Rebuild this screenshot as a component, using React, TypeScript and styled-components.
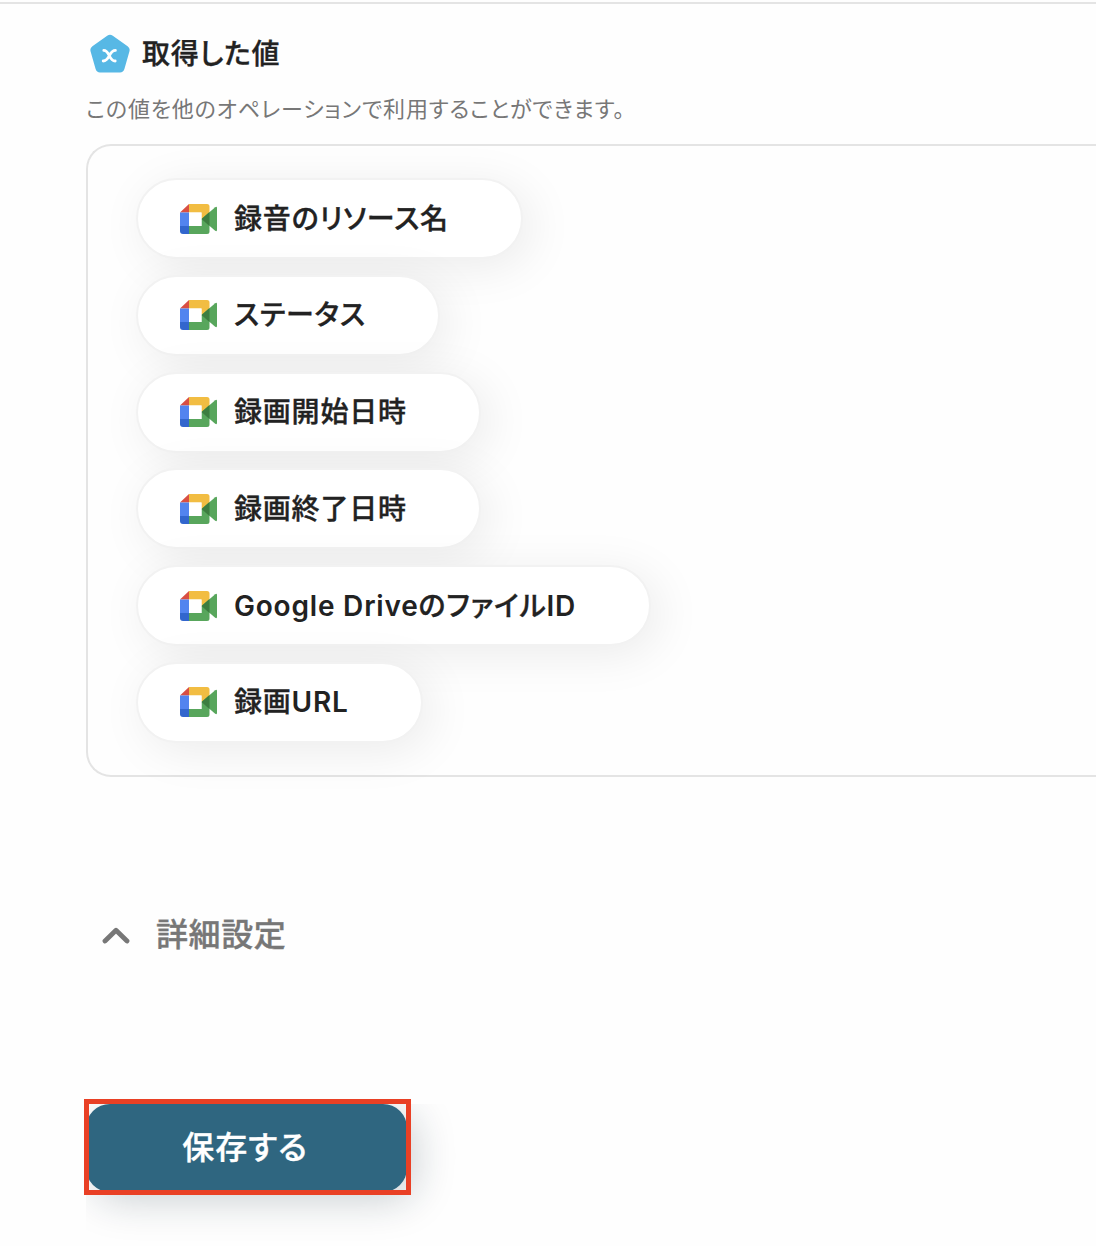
import React from "react";
import styled, { createGlobalStyle } from "styled-components";

const GlobalStyle = createGlobalStyle`
  *, *::before, *::after { box-sizing: border-box; }
  body {
    margin: 0;
    background: #fefefe;
    color: #222;
    font-family: Inter, "Noto Sans CJK JP", sans-serif;
    font-feature-settings: "palt";
  }
`;

const Page = styled.main`
  height: 1246px;
  padding: 2px 0 0 86px;
  overflow: hidden;
  display: flex;
  flex-direction: column;
  background: linear-gradient(#e4e4e4, #e4e4e4) 0 2px / 100% 2px no-repeat;

  & > * {
    flex-shrink: 0;
  }
`;

const Heading = styled.header`
  display: flex;
  align-items: center;
  gap: 12px;
  height: 40px;
  margin-top: 31px;
  padding-left: 4px;
`;

const Title = styled.h2`
  margin: 0;
  padding-top: 1px;
  font-size: 28px;
  line-height: 40px;
  font-weight: 500;
  letter-spacing: 0.8px;
  -webkit-text-stroke: 0.35px currentColor;
  white-space: nowrap;
`;

const Description = styled.p`
  margin: 20px 0 0;
  height: 32px;
  font-size: 22px;
  line-height: 32px;
  letter-spacing: 0.82px;
  color: #777;
  white-space: nowrap;
`;

const Panel = styled.section`
  display: flex;
  flex-direction: column;
  align-items: flex-start;
  gap: 15.8px;
  height: 633px;
  margin-top: 19px;
  padding: 32px 0 0 48px;
  border: 2px solid #e4e4e4;
  border-right: 0;
  border-radius: 25px 0 0 25px;
`;

const Pill = styled.div<{ $width: number }>`
  display: flex;
  align-items: center;
  gap: 16px;
  flex: none;
  width: ${(p) => p.$width}px;
  height: 81px;
  padding-left: 42px;
  border: 2px solid #f2f2f2;
  border-radius: 41px;
  background: #fff;
  box-shadow: 8px 8px 48px rgba(0, 0, 0, 0.08);
`;

const PillLabel = styled.span`
  font-size: 28px;
  line-height: 40px;
  font-weight: 500;
  letter-spacing: 0.8px;
  -webkit-text-stroke: 0.35px currentColor;
  white-space: nowrap;
`;

const Latin = styled.span`
  font-weight: 600;
  -webkit-text-stroke: 0;
`;

const Advanced = styled.button`
  display: flex;
  align-items: center;
  align-self: flex-start;
  gap: 26px;
  height: 48px;
  margin: 134px 0 0;
  padding: 0 0 0 16px;
  border: 0;
  background: none;
  color: #777;
  font: inherit;
  font-size: 32px;
  font-weight: 500;
  line-height: 48px;
  letter-spacing: 0.6px;
  -webkit-text-stroke: 0.35px currentColor;
  white-space: nowrap;
`;

const Actions = styled.div`
  position: relative;
  height: 146px;
  padding-top: 4px;
  margin-top: 141px;
`;

const ShadowClip = styled.div`
  height: 100%;
  overflow: hidden;
`;

const SaveButton = styled.button`
  display: block;
  width: 321px;
  height: 88px;
  padding: 0 3px 6px 0;
  border: 0;
  border-radius: 24px;
  background: #2f6680;
  color: #fff;
  font: inherit;
  font-size: 32px;
  font-weight: 500;
  letter-spacing: 1px;
  -webkit-text-stroke: 0.35px currentColor;
  box-shadow: 8px 8px 40px rgba(20, 40, 55, 0.22);
`;

const Highlight = styled.div`
  position: absolute;
  left: -2px;
  top: -1px;
  width: 327px;
  height: 96px;
  border: 5px solid #e94025;
`;

const ValueIcon = () => (
  <svg width="40" height="40" viewBox="0 0 40 40" aria-hidden="true">
    <path
      d="M17.2 2.8Q20 .7 22.8 2.8L37.6 13.2Q40.4 15.2 39.4 18.5L34.4 36Q33.4 39.4 30 39.4H10Q6.6 39.4 5.6 36L.6 18.5Q-.4 15.2 2.4 13.2Z"
      fill="#57b8e5"
    />
    <path
      d="M13.8 17.4C19.8 17.4 18.6 28 25.2 28M25.4 17.4C18.8 17.4 20 28 13.2 28"
      fill="none"
      stroke="#fff"
      strokeWidth="2.8"
      strokeLinecap="round"
    />
  </svg>
);

const MeetIcon = () => (
  <svg width="38" height="30" viewBox="0 0 38 30" aria-hidden="true">
    <path d="M0 8.5L9 0V8.5Z" fill="#d94f43" />
    <path d="M0 8.5H9V22H0Z" fill="#5284ef" />
    <path d="M0 22H9V30H3Q0 30 0 27Z" fill="#3266cd" />
    <path d="M9 0H27Q29.5 0 29.5 2.5V15H21.5V8.5H9Z" fill="#f2bd42" />
    <path d="M9 22H21.5V15H29.5V27.5Q29.5 30 27 30H9Z" fill="#58a65c" />
    <path d="M21.5 15L35.2 3.2Q37 2.2 37 4V26Q37 27.8 35.2 26.8Z" fill="#58a65c" />
    <path d="M21.5 15L29.5 8V22Z" fill="#3d7d40" />
    <path d="M9 8.5H21.5V22H9Z" fill="#fff" />
  </svg>
);

const ChevronUp = () => (
  <svg width="28" height="18" viewBox="0 0 28 18" aria-hidden="true">
    <path
      d="M3 15L14 4.2L25 15"
      fill="none"
      stroke="#777"
      strokeWidth="4.8"
      strokeLinecap="round"
      strokeLinejoin="round"
    />
  </svg>
);

const values = [
  { id: "resource", label: "録音のリソース名", width: 387 },
  { id: "status", label: "ステータス", width: 304 },
  { id: "start", label: "録画開始日時", width: 345 },
  { id: "end", label: "録画終了日時", width: 345 },
  {
    id: "file",
    label: (
      <>
        <Latin>Google Drive</Latin>のファイル<Latin>ID</Latin>
      </>
    ),
    width: 515,
  },
  {
    id: "url",
    label: (
      <>
        録画<Latin>URL</Latin>
      </>
    ),
    width: 287,
  },
];

export default function App() {
  return (
    <>
      <GlobalStyle />
      <Page>
        <Heading>
          <ValueIcon />
          <Title>取得した値</Title>
        </Heading>
        <Description>この値を他のオペレーションで利用することができます。</Description>
        <Panel>
          {values.map((v) => (
            <Pill key={v.id} $width={v.width}>
              <MeetIcon />
              <PillLabel>{v.label}</PillLabel>
            </Pill>
          ))}
        </Panel>
        <Advanced>
          <ChevronUp />
          詳細設定
        </Advanced>
        <Actions>
          <ShadowClip>
            <SaveButton>保存する</SaveButton>
          </ShadowClip>
          <Highlight />
        </Actions>
      </Page>
    </>
  );
}
